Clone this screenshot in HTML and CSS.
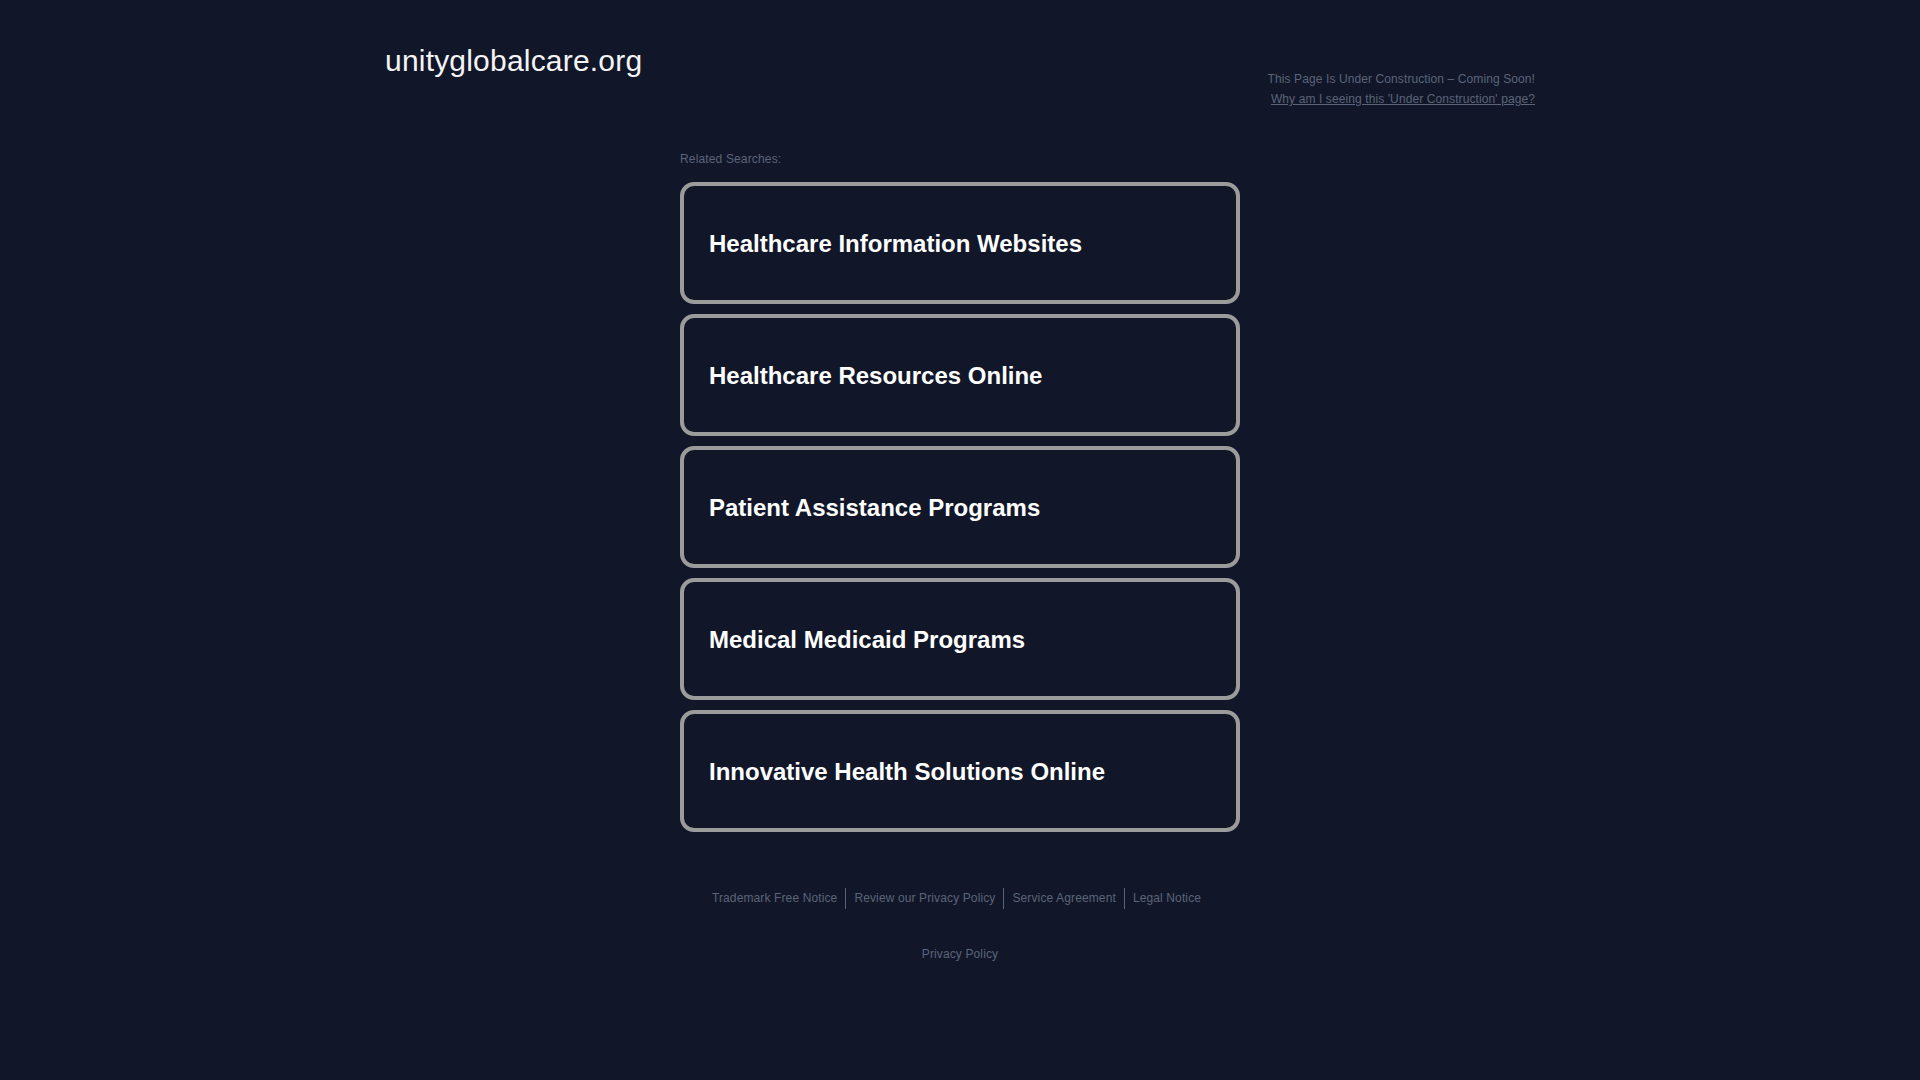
FILE: index.html
```html
<!DOCTYPE html>
<html lang="en">
<head>
<meta charset="utf-8">
<title>unityglobalcare.org</title>
<link rel="stylesheet" href="styles.css">
</head>
<body>
<header class="header">
  <h1 class="domain">unityglobalcare.org</h1>
  <div class="notice">
    <div class="notice-line">This Page Is Under Construction – Coming Soon!</div>
    <a class="notice-link" href="#">Why am I seeing this 'Under Construction' page?</a>
  </div>
</header>
<main class="main">
  <div class="related">Related Searches:</div>
  <ul class="searches">
    <li><a class="search" href="#">Healthcare Information Websites</a></li>
    <li><a class="search" href="#">Healthcare Resources Online</a></li>
    <li><a class="search" href="#">Patient Assistance Programs</a></li>
    <li><a class="search" href="#">Medical Medicaid Programs</a></li>
    <li><a class="search" href="#">Innovative Health Solutions Online</a></li>
  </ul>
</main>
<footer class="footer">
  <nav class="footer-links">
    <a class="footer-link" href="#">Trademark Free Notice</a><a class="footer-link" href="#">Review our Privacy Policy</a><a class="footer-link" href="#">Service Agreement</a><a class="footer-link" href="#">Legal Notice</a>
  </nav>
  <div class="footer-privacy"><a class="footer-plain" href="#">Privacy Policy</a></div>
</footer>
</body>
</html>
```
FILE: styles.css
```css
html, body {
  margin: 0;
  padding: 0;
}
body {
  background: #111729;
  font-family: "Liberation Sans", Arial, sans-serif;
  color: #5b6478;
  min-height: 1080px;
}
a {
  color: inherit;
  text-decoration: none;
}
.header {
  width: 1150px;
  margin: 0 auto;
  display: flex;
  justify-content: space-between;
  align-items: flex-start;
}
.domain {
  margin: 44px 0 0 0;
  font-size: 30px;
  font-weight: normal;
  line-height: 34px;
  letter-spacing: 0.2px;
  color: #f4f4f6;
}
.notice {
  margin-top: 69px;
  text-align: right;
  font-size: 12px;
  line-height: 20px;
  letter-spacing: 0.1px;
  color: #5b6478;
}
.notice-link {
  text-decoration: underline;
}
.main {
  width: 560px;
  margin: 40px auto 0;
}
.related {
  font-size: 12px;
  line-height: 20px;
  letter-spacing: 0.15px;
  color: #5b6478;
}
.searches {
  list-style: none;
  margin: 13px 0 0 0;
  padding: 0;
}
.searches li {
  margin: 0 0 10px 0;
}
.search {
  box-sizing: border-box;
  height: 122px;
  display: flex;
  align-items: center;
  padding: 2px 25px 0;
  border: 4px solid #9b9b9b;
  border-radius: 14px;
  font-size: 24px;
  font-weight: bold;
  color: #ffffff;
}
.footer {
  margin-top: 56px;
  text-align: center;
  font-size: 12px;
  letter-spacing: 0.12px;
  color: #5b6478;
}
.footer-links {
  display: flex;
  justify-content: center;
  padding-right: 7px;
}
.footer-link {
  display: block;
  padding: 0 8px;
  line-height: 21px;
}
.footer-link + .footer-link {
  border-left: 1px solid #5b6478;
}
.footer-privacy {
  margin-top: 35px;
  line-height: 20px;
}
```
